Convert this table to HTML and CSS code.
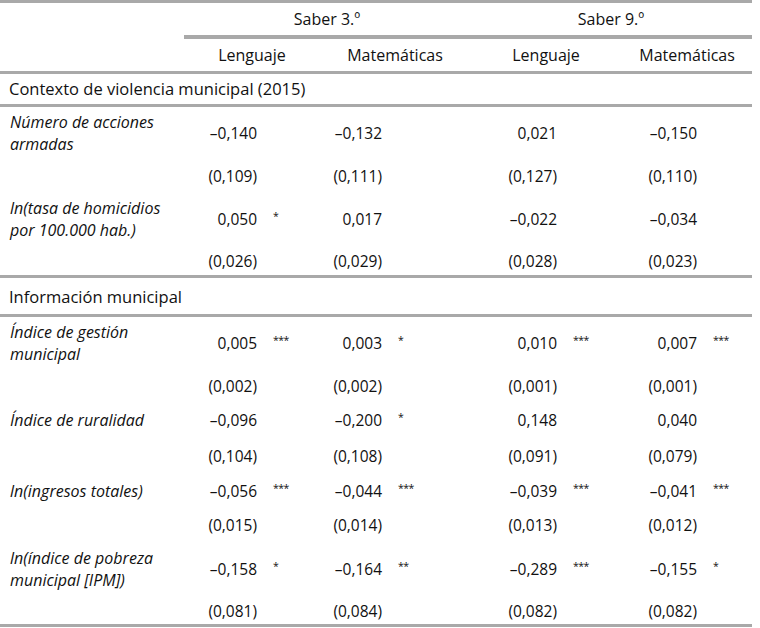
FILE: index.html
```html
<!DOCTYPE html>
<html lang="es">
<head>
<meta charset="utf-8">
<title>Tabla</title>
<link rel="stylesheet" href="styles.css">
</head>
<body>
<table class="results">
  <colgroup>
    <col class="c-label"><col class="c-n1"><col class="c-s1"><col class="c-n2"><col class="c-s2"><col class="c-n3"><col class="c-s3"><col class="c-n4"><col class="c-s4">
  </colgroup>
  <thead>
    <tr class="h-group">
      <th></th>
      <th colspan="4" class="grp">Saber 3.º</th>
      <th colspan="4" class="grp">Saber 9.º</th>
    </tr>
    <tr class="h-sub">
      <th></th>
      <th colspan="2">Lenguaje</th>
      <th colspan="2">Matemáticas</th>
      <th colspan="2">Lenguaje</th>
      <th colspan="2">Matemáticas</th>
    </tr>
  </thead>
  <tbody>
    <tr class="section first"><td colspan="9">Contexto de violencia municipal (2015)</td></tr>
    <tr class="r-a">
      <td class="lbl">Número de acciones<br>armadas</td>
      <td class="num">–0,140</td><td class="st"></td>
      <td class="num">–0,132</td><td class="st"></td>
      <td class="num">0,021</td><td class="st"></td>
      <td class="num">–0,150</td><td class="st"></td>
    </tr>
    <tr class="r-b">
      <td class="lbl"></td>
      <td class="num">(0,109)</td><td class="st"></td>
      <td class="num">(0,111)</td><td class="st"></td>
      <td class="num">(0,127)</td><td class="st"></td>
      <td class="num">(0,110)</td><td class="st"></td>
    </tr>
    <tr class="r-c">
      <td class="lbl">ln(tasa de homicidios<br>por 100.000 hab.)</td>
      <td class="num">0,050</td><td class="st"><span>*</span></td>
      <td class="num">0,017</td><td class="st"></td>
      <td class="num">–0,022</td><td class="st"></td>
      <td class="num">–0,034</td><td class="st"></td>
    </tr>
    <tr class="r-d end">
      <td class="lbl"></td>
      <td class="num">(0,026)</td><td class="st"></td>
      <td class="num">(0,029)</td><td class="st"></td>
      <td class="num">(0,028)</td><td class="st"></td>
      <td class="num">(0,023)</td><td class="st"></td>
    </tr>
    <tr class="section second"><td colspan="9">Información municipal</td></tr>
    <tr class="r-e">
      <td class="lbl">Índice de gestión<br>municipal</td>
      <td class="num">0,005</td><td class="st"><span>***</span></td>
      <td class="num">0,003</td><td class="st"><span>*</span></td>
      <td class="num">0,010</td><td class="st"><span>***</span></td>
      <td class="num">0,007</td><td class="st"><span>***</span></td>
    </tr>
    <tr class="r-f">
      <td class="lbl"></td>
      <td class="num">(0,002)</td><td class="st"></td>
      <td class="num">(0,002)</td><td class="st"></td>
      <td class="num">(0,001)</td><td class="st"></td>
      <td class="num">(0,001)</td><td class="st"></td>
    </tr>
    <tr class="r-g">
      <td class="lbl">Índice de ruralidad</td>
      <td class="num">–0,096</td><td class="st"></td>
      <td class="num">–0,200</td><td class="st"><span>*</span></td>
      <td class="num">0,148</td><td class="st"></td>
      <td class="num">0,040</td><td class="st"></td>
    </tr>
    <tr class="r-f">
      <td class="lbl"></td>
      <td class="num">(0,104)</td><td class="st"></td>
      <td class="num">(0,108)</td><td class="st"></td>
      <td class="num">(0,091)</td><td class="st"></td>
      <td class="num">(0,079)</td><td class="st"></td>
    </tr>
    <tr class="r-h">
      <td class="lbl">ln(ingresos totales)</td>
      <td class="num">–0,056</td><td class="st"><span>***</span></td>
      <td class="num">–0,044</td><td class="st"><span>***</span></td>
      <td class="num">–0,039</td><td class="st"><span>***</span></td>
      <td class="num">–0,041</td><td class="st"><span>***</span></td>
    </tr>
    <tr class="r-f">
      <td class="lbl"></td>
      <td class="num">(0,015)</td><td class="st"></td>
      <td class="num">(0,014)</td><td class="st"></td>
      <td class="num">(0,013)</td><td class="st"></td>
      <td class="num">(0,012)</td><td class="st"></td>
    </tr>
    <tr class="r-i">
      <td class="lbl">ln(índice de pobreza<br>municipal [IPM])</td>
      <td class="num">–0,158</td><td class="st"><span>*</span></td>
      <td class="num">–0,164</td><td class="st"><span>**</span></td>
      <td class="num">–0,289</td><td class="st"><span>***</span></td>
      <td class="num">–0,155</td><td class="st"><span>*</span></td>
    </tr>
    <tr class="r-j end">
      <td class="lbl"></td>
      <td class="num">(0,081)</td><td class="st"></td>
      <td class="num">(0,084)</td><td class="st"></td>
      <td class="num">(0,082)</td><td class="st"></td>
      <td class="num">(0,082)</td><td class="st"></td>
    </tr>
  </tbody>
</table>
</body>
</html>
```
FILE: styles.css
```css
html, body {
  margin: 0;
  padding: 0;
  background: #ffffff;
}

body {
  font-family: "Open Sans", "Liberation Sans", sans-serif;
  font-size: 16px;
  color: #111111;
}

.results {
  width: 752px;
  table-layout: fixed;
  border-collapse: separate;
  border-spacing: 0;
  border-top: 3px solid #a9a9a9;
}

.c-label { width: 184px; }
.c-n1 { width: 78px; }
.c-s1 { width: 58px; }
.c-n2 { width: 67px; }
.c-s2 { width: 83px; }
.c-n3 { width: 92px; }
.c-s3 { width: 60px; }
.c-n4 { width: 80px; }
.c-s4 { width: 50px; }

.results th,
.results td {
  padding: 0;
  font-weight: normal;
  white-space: nowrap;
  vertical-align: middle;
}

.results th {
  text-align: center;
}

.h-group th {
  line-height: 32px;
}

.h-group th.grp {
  border-bottom: 4px solid #a9a9a9;
}

.h-sub th {
  line-height: 32px;
  border-bottom: 3px solid #a9a9a9;
}

.section td {
  padding-left: 9px;
  font-size: 16.5px;
  border-bottom: 3px solid #a9a9a9;
}

.section.first td {
  line-height: 30px;
}

.section.second td {
  padding-top: 2px;
  line-height: 34px;
}

tbody tr td {
  line-height: 22px;
}

.lbl {
  font-style: italic;
  padding-left: 10px !important;
}

.num {
  font-size: 15.5px;
  text-align: right;
  padding-right: 5px !important;
}

.st {
  text-align: left;
  padding-left: 11px !important;
  font-size: 15px;
}

.st span {
  display: inline-block;
  font-size: 10.5px;
  line-height: 10px;
  letter-spacing: -0.5px;
  vertical-align: 5px;
}

.r-a td { padding-top: 4px; }
.r-b td { padding-top: 10px; padding-bottom: 10px; }
.r-c td { padding-top: 0; }
.r-d td { padding-top: 9px; padding-bottom: 3px; }
.r-e td { padding-top: 4px; }
.r-f td { padding-top: 10px; padding-bottom: 10px; }
.r-g td { padding-top: 2px; padding-bottom: 4px; }
.r-h td { padding-top: 3px; padding-bottom: 2px; }
.r-i td { padding-top: 1px; }
.r-j td { padding-top: 9px; padding-bottom: 2px; }

.end td {
  border-bottom: 3px solid #a9a9a9;
}
```
